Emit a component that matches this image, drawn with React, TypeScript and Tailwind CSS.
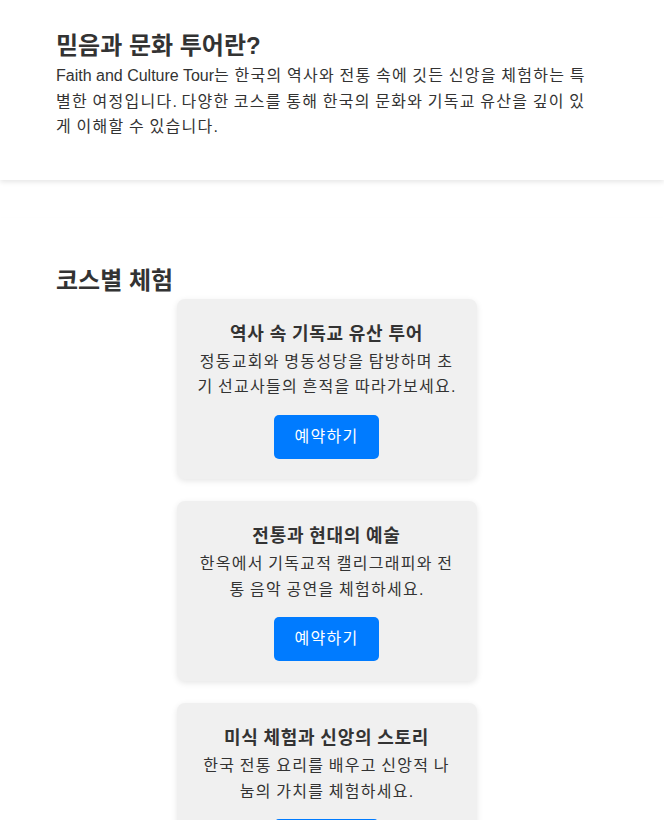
import React from "react";

const courses = [
  {
    title: "역사 속 기독교 유산 투어",
    desc: "정동교회와 명동성당을 탐방하며 초기 선교사들의 흔적을 따라가보세요.",
  },
  {
    title: "전통과 현대의 예술",
    desc: "한옥에서 기독교적 캘리그래피와 전통 음악 공연을 체험하세요.",
  },
  {
    title: "미식 체험과 신앙의 스토리",
    desc: "한국 전통 요리를 배우고 신앙적 나눔의 가치를 체험하세요.",
  },
];

function K({ text, cls }: { text: string; cls: string }) {
  const parts = text.split(/([\uAC00-\uD7A3]+)/);
  return (
    <>
      {parts.map((p, i) =>
        /[\uAC00-\uD7A3]/.test(p) ? (
          <span key={i} className={cls}>
            {p}
          </span>
        ) : (
          <React.Fragment key={i}>{p}</React.Fragment>
        )
      )}
    </>
  );
}

export default function App() {
  return (
    <div
      className="min-h-[820px] bg-white text-[#333]"
      style={{ fontFamily: '"Liberation Sans", "Noto Sans CJK KR", Arial, sans-serif' }}
    >
      <section className="bg-white px-14 pt-[30px] pb-[40px] shadow-[0_2px_5px_rgba(0,0,0,0.1)]">
        <h2 className="text-2xl font-bold leading-8 text-[#333]">믿음과 문화 투어란?</h2>
        <p className="mt-[1px] w-[540px] break-all text-base leading-[1.6] text-[#333]">
          <K
            cls="tracking-[0.08em]"
            text="Faith and Culture Tour는 한국의 역사와 전통 속에 깃든 신앙을 체험하는 특별한 여정입니다. 다양한 코스를 통해 한국의 문화와 기독교 유산을 깊이 있게 이해할 수 있습니다."
          />
        </p>
      </section>

      <section className="mt-[38px] bg-white px-14 pt-[47px] pb-10 shadow-[0_1px_3px_rgba(0,0,0,0.03)]">
        <h2 className="text-2xl font-bold leading-8 text-[#333]">코스별 체험</h2>
        <div className="mt-[2px] flex flex-col items-center gap-[22px] pr-[11px]">
          {courses.map((c) => (
            <div
              key={c.title}
              className="w-[300px] rounded-lg bg-[#f0f0f0] px-5 pt-[21px] pb-5 text-center shadow-[0_2px_6px_rgba(0,0,0,0.1)]"
            >
              <h3 className="text-lg font-bold leading-[29px] text-[#333]">
                <K cls="tracking-[0.04em]" text={c.title} />
              </h3>
              <p className="break-all text-base leading-[1.6] text-[#333]">
                <K cls="tracking-[0.08em]" text={c.desc} />
              </p>
              <button className="mt-[15px] h-[44px] rounded-[5px] bg-[#007bff] px-5 text-base text-white">
                <K cls="tracking-[0.08em]" text="예약하기" />
              </button>
            </div>
          ))}
        </div>
      </section>
    </div>
  );
}
